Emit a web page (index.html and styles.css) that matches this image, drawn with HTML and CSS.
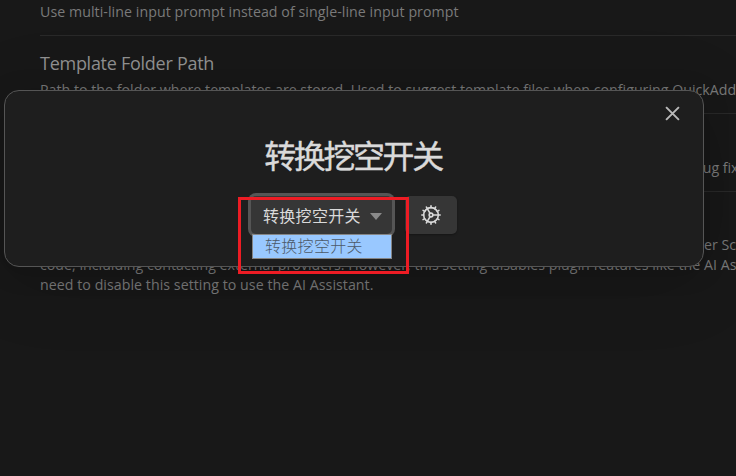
FILE: index.html
```html
<!DOCTYPE html>
<html lang="en">
<head>
<meta charset="utf-8">
<title>QuickAdd</title>
<link rel="stylesheet" href="styles.css">
</head>
<body>
<main class="settings">
  <section class="item first">
    <p class="desc"><span class="l1">Use multi-line input prompt instead of single-line input prompt</span></p>
  </section>
  <section class="item">
    <h2 class="name">Template Folder Path</h2>
    <p class="desc"><span class="l2">Path to the folder where templates are stored. Used to suggest template files when configuring QuickAdd</span></p>
  </section>
  <section class="item">
    <h2 class="name">Announce Updates</h2>
    <p class="desc"><span class="l3">Display release notes when a new version is installed. This includes new features, demo videos, and bug fixes.</span></p>
  </section>
  <section class="item last">
    <h2 class="name">Disable AI &amp; Online features</h2>
    <p class="desc"><span class="l4">This prevents the plugin from making requests to external providers like OpenAI. You can still use User Scripts</span></p>
    <p class="desc"><span class="l5">code, inclulding contacting external providers. However, this setting disables plugin features like the AI Assistant.</span></p>
    <p class="desc"><span class="l6">need to disable this setting to use the AI Assistant.</span></p>
  </section>
</main>
<div class="modal">
  <svg class="close" viewBox="0 0 14 14"><path d="M1 1L13 13M13 1L1 13"/></svg>
  <h1 class="title">转换挖空开关</h1>
  <div class="controls">
    <div class="select"><span>转换挖空开关</span><svg class="arrow" viewBox="0 0 12 7"><path d="M0 0H12L6 7Z"/></svg>
      <div class="option">转换挖空开关</div>
    </div>
    <div class="button">
      <svg class="gear" viewBox="0 0 24 24"><circle cx="12" cy="12" r="8"/><circle cx="12" cy="12" r="2"/><path d="M12 2v2M12 22v-2M17 20.66l-1-1.73M11 10.27L7 3.34M20.66 17l-1.73-1M3.34 7l1.73 1M14 12h8M2 12h2M20.66 7l-1.73 1M3.34 17l1.73-1M17 3.34l-1 1.73M11 13.73l-4 6.93"/></svg>
    </div>
  </div>
</div>
<div class="highlight"></div>
</body>
</html>
```
FILE: styles.css
```css
* { box-sizing: border-box; }
body {
  margin: 0;
  width: 736px;
  height: 476px;
  overflow: hidden;
  position: relative;
  background: #181818;
  font-family: "Open Sans", "Noto Sans CJK SC", sans-serif;
}
.settings { padding: 2px 0 0 40px; overflow: hidden; }
.item { border-top: 1px solid #292929; padding: 15px 0 13px; white-space: nowrap; }
.first { border: 0; padding-top: 0; }
.name { margin: 0 0 4px; font-size: 18px; line-height: 25px; font-weight: 400; color: #919191; letter-spacing: -0.27px; }
.last .name { margin-bottom: 3px; }
.desc { margin: 0; font-size: 14.2px; line-height: 20px; color: #7a7a7a; }
.l1 { letter-spacing: .06px; }
.l2 { letter-spacing: .015px; }
.l3 { letter-spacing: -.055px; }
.l4 { letter-spacing: .01px; }
.l5 { letter-spacing: .015px; }
.l6 { letter-spacing: .045px; }
.modal {
  position: absolute;
  left: 4px;
  top: 90px;
  width: 700px;
  height: 177px;
  background: #1e1e1e;
  border: 1px solid #555;
  border-radius: 15px;
  box-shadow: 0 4px 28px rgba(0,0,0,.14), 0 12px 80px rgba(0,0,0,.14);
  padding-top: 42px;
}
.close { position: absolute; right: 23px; top: 15px; width: 15px; height: 15px; fill: none; stroke: #bababa; stroke-width: 1.8; }
.title { margin: 0 2px 0 0; height: 46px; line-height: 46px; font-size: 32px; font-weight: 400; letter-spacing: -2.4px; text-align: center; color: #dadada; -webkit-text-stroke: .4px #dadada; }
.controls { display: flex; gap: 13px; margin: 17px 0 0 246px; }
.select {
  position: relative;
  width: 141px;
  height: 38px;
  display: flex;
  align-items: center;
  justify-content: space-between;
  padding: 2px 10px 0 12px;
  border-radius: 5px;
  background: #363636;
  box-shadow: 0 0 0 3px #555;
  color: #dadada;
  font-size: 16px;
  letter-spacing: .3px;
  line-height: 20px;
}
.arrow { width: 12px; height: 7px; fill: #8a8a8a; }
.option {
  position: absolute;
  left: 1px;
  top: 38px;
  width: 140px;
  height: 25px;
  padding-left: 12px;
  border: 1px solid #858585;
  background: #99c8ff;
  color: #4c5968;
  font-weight: 300;
  line-height: 23px;
}
.button { width: 52px; height: 38px; display: grid; place-items: center; background: #363636; border-radius: 5px; box-shadow: 0 1px 2px rgba(0,0,0,.3); }
.gear { width: 22px; height: 22px; fill: none; stroke: #dadada; stroke-width: 1.75; stroke-linecap: round; }
.highlight { position: absolute; left: 238px; top: 197px; width: 171px; height: 77px; border: 3px solid #ed1c24; }
```
